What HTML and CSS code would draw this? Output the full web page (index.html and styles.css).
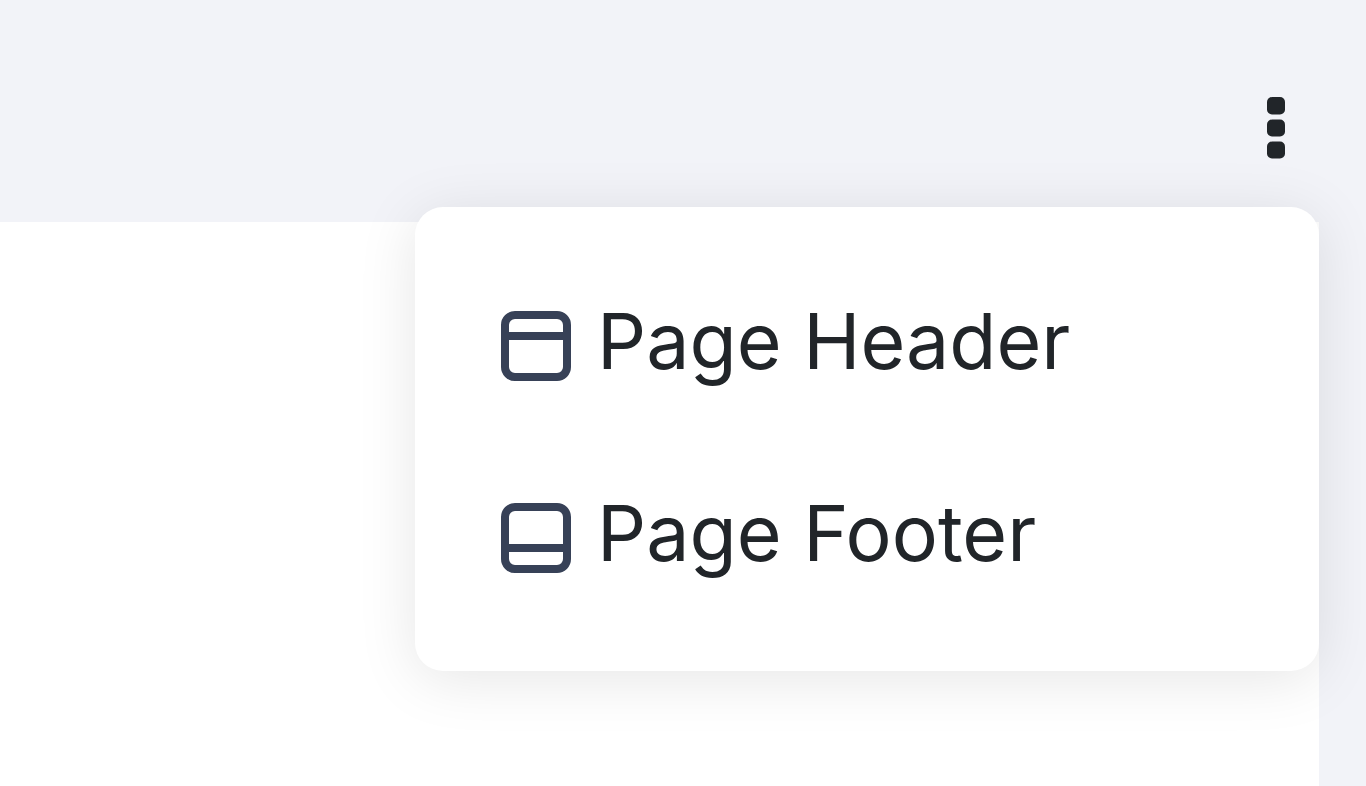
FILE: index.html
```html
<!DOCTYPE html>
<html lang="en">
<head>
    <meta charset="UTF-8">
    <meta name="viewport" content="width=device-width, initial-scale=1.0">
    <title>Page Options</title>
    <link rel="stylesheet" href="styles.css">
</head>
<body>
    <header class="toolbar">
        <div class="options">
            <button class="options-button" type="button" aria-label="Page options" aria-expanded="true">
                <svg width="20" height="64" viewBox="0 0 20 64" fill="#212529">
                    <rect x="1" y="1" width="18" height="17.5" rx="5"/>
                    <rect x="1" y="23.5" width="18" height="17" rx="5"/>
                    <rect x="1" y="45.5" width="18" height="17" rx="5"/>
                </svg>
            </button>
            <div class="menu">
                <button class="menu-item" type="button">
                    <svg class="icon" viewBox="0 0 72 72" fill="none" stroke="#374157" stroke-width="8">
                        <rect x="5" y="5" width="62" height="62" rx="10"/>
                        <path d="M5 26H67"/>
                    </svg><span>Page Header</span>
                </button>
                <button class="menu-item" type="button">
                    <svg class="icon" viewBox="0 0 72 72" fill="none" stroke="#374157" stroke-width="8">
                        <rect x="5" y="5" width="62" height="62" rx="10"/>
                        <path d="M5 46H67"/>
                    </svg><span>Page Footer</span>
                </button>
            </div>
        </div>
    </header>
    <main class="page"></main>
</body>
</html>
```

FILE: styles.css
```css
* {
    box-sizing: border-box;
}

body {
    margin: 0;
    min-height: 100vh;
    display: flex;
    flex-direction: column;
    background-color: #f2f3f8;
    color: #212529;
    font-family: Inter, sans-serif;
}

.toolbar {
    display: flex;
    justify-content: flex-end;
    padding: 96px 47px 62px;
}

.options {
    position: relative; /* Anchor for the menu */
}

button {
    border: none;
    background: none;
    color: inherit;
    font-family: inherit;
    cursor: pointer;
}

.options-button {
    display: block;
    padding: 0 33px;
}

.options-button svg {
    display: block;
}

.page {
    flex: 1;
    margin-right: 47px;
    background-color: #fff;
}

.menu {
    position: absolute;
    top: 111px;
    right: 0;
    width: 904px;
    max-width: 95vw;
    padding: 38px 0 42px;
    border-radius: 28px;
    background-color: #fff;
    box-shadow: 0 8px 60px rgba(0, 0, 0, 0.1);
}

.menu-item {
    display: block;
    width: 100%;
    padding: 0 85px;
    font-size: 77px;
    line-height: 192px;
    text-align: left;
    white-space: nowrap;
}

.icon {
    width: 72px;
    height: 72px;
    margin-right: 25px;
    vertical-align: -13px; /* Hangs the icon just below the text baseline */
}
```
